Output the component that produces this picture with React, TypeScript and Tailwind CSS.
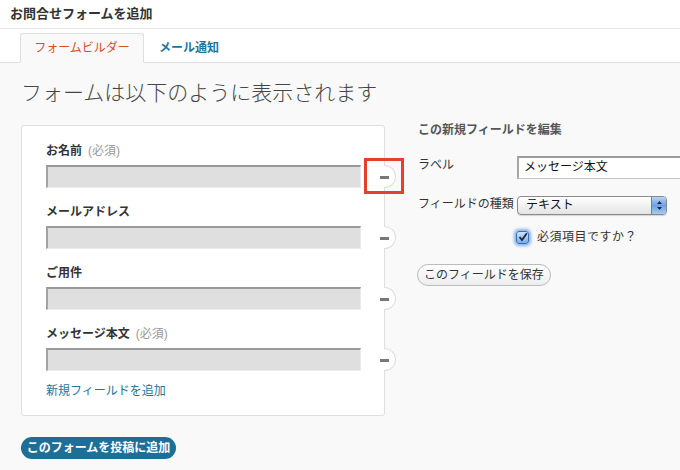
import React from "react";

const fields = [
  { label: "お名前", required: true },
  { label: "メールアドレス", required: false },
  { label: "ご用件", required: false },
  { label: "メッセージ本文", required: true },
];

function FieldRow({ label, required, highlight }: { label: string; required: boolean; highlight?: boolean }) {
  return (
    <div className="relative pb-[16px] pl-[24px]">
      <div className="h-[16px] text-[12px] leading-[16px] font-bold text-[#333]">
        {label}
        {required && <span className="ml-[6px] font-normal text-[#999]">(必須)</span>}
      </div>
      <div className="mt-[6px] h-[23px] w-[315px] border border-[#ececec] border-t-2 border-t-[#999] border-l-2 border-l-[#a3a3a3] bg-[#dfdfdf]" />
      <div className="absolute left-[100%] top-[22px] h-[23px] w-[12px] rounded-r-full border border-l-0 border-[#dfdfdf] bg-white" />
      <div className="absolute left-[358px] top-[33px] h-[3px] w-[9px] bg-[#777]" />
      {highlight && (
        <div className="absolute left-[342px] top-[15px] h-[36px] w-[40px] border-[3px] border-[#e4402f]" />
      )}
    </div>
  );
}

function SelectBox() {
  return (
    <div className="flex h-[19px] w-[150px] shrink-0 overflow-hidden rounded-[4px] border border-[#8a8a8a] bg-gradient-to-b from-white to-[#e4e4e4] shadow-[0_1px_1px_rgba(0,0,0,0.15)]">
      <div className="flex-1 pl-[8px] text-[12px] leading-[17px] text-[#111]">テキスト</div>
      <div className="flex w-[15px] items-center justify-center border-l border-[#5b83bf] bg-gradient-to-b from-[#b8d3f3] via-[#6da1e4] to-[#a9cbf2]">
        <svg width="7" height="11" viewBox="0 0 7 11">
          <path d="M3.5 1 L6 4 L1 4 Z" fill="#1d2a3f" />
          <path d="M3.5 10 L6 7 L1 7 Z" fill="#1d2a3f" />
        </svg>
      </div>
    </div>
  );
}

export default function App() {
  return (
    <div className="h-[470px] w-[680px] overflow-hidden bg-[#f9f9f9] font-['Liberation_Sans','Noto_Sans_CJK_JP',sans-serif] text-[#333]">
      <div className="flex h-[29px] items-center border-b border-[#e3e3e3] bg-white px-[10px] text-[13px] font-bold text-[#333]">
        お問合せフォームを追加
      </div>
      <div className="flex h-[34px] items-end border-b border-[#dfdfdf] bg-white pl-[20px]">
        <div className="-mb-px flex h-[30px] w-[124px] items-center justify-center rounded-t-[3px] border border-[#dfdfdf] border-b-[#f9f9f9] bg-[#f9f9f9] text-[12px] text-[#d54e21]">
          フォームビルダー
        </div>
        <div className="flex h-[29px] items-center pl-[15px] text-[12px] font-bold text-[#21759b]">メール通知</div>
      </div>

      <div className="px-[21px]">
        <h2 className="mt-[16px] h-[28px] font-['Liberation_Serif','Noto_Sans_CJK_JP',serif] text-[21px] leading-[28px] font-light text-[#464646]">
          フォームは以下のように表示されます
        </h2>

        <div className="mt-[18px] flex items-start">
          <div className="h-[291px] w-[364px] shrink-0 rounded-[3px] border border-[#dfdfdf] bg-white pt-[17px]">
            {fields.map((f, i) => (
              <FieldRow key={f.label} label={f.label} required={f.required} highlight={i === 0} />
            ))}
            <div className="-mt-[4px] pl-[24px] text-[12px] leading-[16px] text-[#21759b]">新規フィールドを追加</div>
          </div>

          <div className="-mt-[3px] ml-[33px] min-w-0 flex-1">
            <div className="text-[12px] leading-[16px] font-bold text-[#555]">この新規フィールドを編集</div>

            <div className="mt-[18px] flex items-start">
              <div className="w-[99px] shrink-0 pt-[1px] text-[12px] leading-[16px]">ラベル</div>
              <div className="h-[23px] w-[180px] shrink-0 border border-[#c8c8c8] border-t-2 border-t-[#9a9a9a] border-l-2 border-l-[#a8a8a8] bg-white pl-[5px] text-[12px] leading-[19px] text-[#111]">
                メッセージ本文
              </div>
            </div>

            <div className="mt-[17px] flex items-start">
              <div className="w-[99px] shrink-0 text-[12px] leading-[16px]">フィールドの種類</div>
              <SelectBox />
            </div>

            <div className="mt-[14px] flex items-center pl-[98px]">
              <div className="flex h-[13px] w-[13px] items-center justify-center rounded-[3px] border border-[#3a6fb8] bg-gradient-to-b from-[#cfe3fa] to-[#79aee9] shadow-[0_0_3px_2px_rgba(80,150,230,0.7)]">
                <svg width="10" height="10" viewBox="0 0 10 10">
                  <path d="M1.5 5 L4 8 L8.8 1.2" fill="none" stroke="#1b2640" strokeWidth="1.8" />
                </svg>
              </div>
              <span className="ml-[8px] text-[12px] leading-[16px] tracking-[0.5px]">必須項目ですか？</span>
            </div>

            <button className="mt-[19px] -ml-[1px] h-[22px] w-[134px] rounded-full border border-[#bbb] bg-gradient-to-b from-white to-[#ededed] text-[12px] text-[#333]">
              このフィールドを保存
            </button>
          </div>
        </div>

        <button className="mt-[21px] h-[22px] w-[155px] rounded-full bg-[#1e6f97] text-[12px] font-bold text-white">
          このフォームを投稿に追加
        </button>
      </div>
    </div>
  );
}
